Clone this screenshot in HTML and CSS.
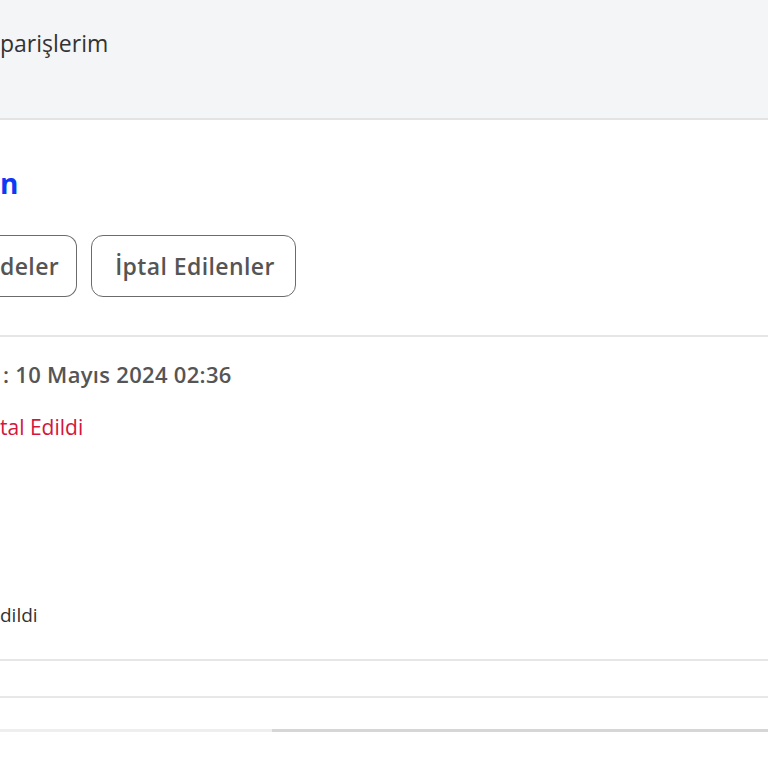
FILE: index.html
```html
<!DOCTYPE html>
<html lang="tr">
<head>
    <meta charset="UTF-8">
    <title>Siparişlerim</title>
    <link rel="stylesheet" href="styles.css">
</head>
<body>
<div class="topbar">
    <h1 class="crumb">parişlerim</h1>
</div>
<div class="main">
    <h2 class="title">n</h2>
    <div class="tabs">
        <span class="tab tab-cut">deler</span>
        <span class="tab">İptal Edilenler</span>
    </div>
    <div class="order">
        <div class="order-head">
            <p class="order-date">: 10 Mayıs 2024 02:36</p>
            <p class="order-status">tal Edildi</p>
        </div>
        <div class="order-item">
            <p class="item-status">dildi</p>
        </div>
        <div class="row"></div>
        <div class="row row-last"></div>
    </div>
    <div class="scrollbar"><div class="thumb"></div></div>
</div>
</body>
</html>
```

FILE: styles.css
```css
* {
    padding: 0;
    margin: 0;
    box-sizing: border-box;
}

body {
    font-family: "Open Sans", "Noto Sans", sans-serif;
    background: #fff;
    color: #333;
    overflow: hidden;
}

.topbar {
    height: 120px;
    background: #f4f5f7;
    border-bottom: 2px solid #e3e3e3;
    padding-top: 28px;
}

.crumb {
    font-size: 23px;
    font-weight: 500;
    line-height: 31px;
    color: #333;
}

.title {
    font-size: 28px;
    font-weight: 700;
    line-height: 38px;
    color: #0d3bf5;
    margin-top: 44px;
}

.tabs {
    display: flex;
    gap: 14px;
    margin-top: 33px;
}

.tab {
    height: 62px;
    display: flex;
    align-items: center;
    padding: 0 20px 0 23px;
    border: 1.5px solid #6b6b6b;
    border-radius: 12px;
    font-size: 23px;
    font-weight: 600;
    letter-spacing: 0.4px;
    color: #555;
}

/* first tab runs past the left edge of the view */
.tab-cut {
    margin-left: -30px;
    padding-left: 30px;
    padding-right: 17px;
    border-left: 0;
    border-radius: 0 12px 12px 0;
}

.order {
    margin-top: 38px;
    border-top: 2px solid #e6e6e6;
}

.order-head {
    padding-top: 24px;
    height: 150px;
}

.order-date {
    font-size: 22px;
    font-weight: 600;
    letter-spacing: 0.3px;
    line-height: 27px;
    color: #555;
    padding-left: 3px;
}

.order-status {
    margin-top: 26px;
    font-size: 21px;
    line-height: 27px;
    color: #d3163c;
}

.order-item {
    padding-top: 116px;
    height: 174px;
    border-bottom: 2px solid #e6e6e6;
}

.item-status {
    font-size: 19px;
    line-height: 25px;
    color: #333;
}

.row {
    height: 37px;
    border-bottom: 2px solid #e8e8e8;
}

.row-last {
    height: 31px;
    border-bottom: 0;
}

.scrollbar {
    height: 3px;
    background: #eeeeee;
}

.thumb {
    margin-left: 272px;
    height: 3px;
    background: #d6d6d6;
}
```
